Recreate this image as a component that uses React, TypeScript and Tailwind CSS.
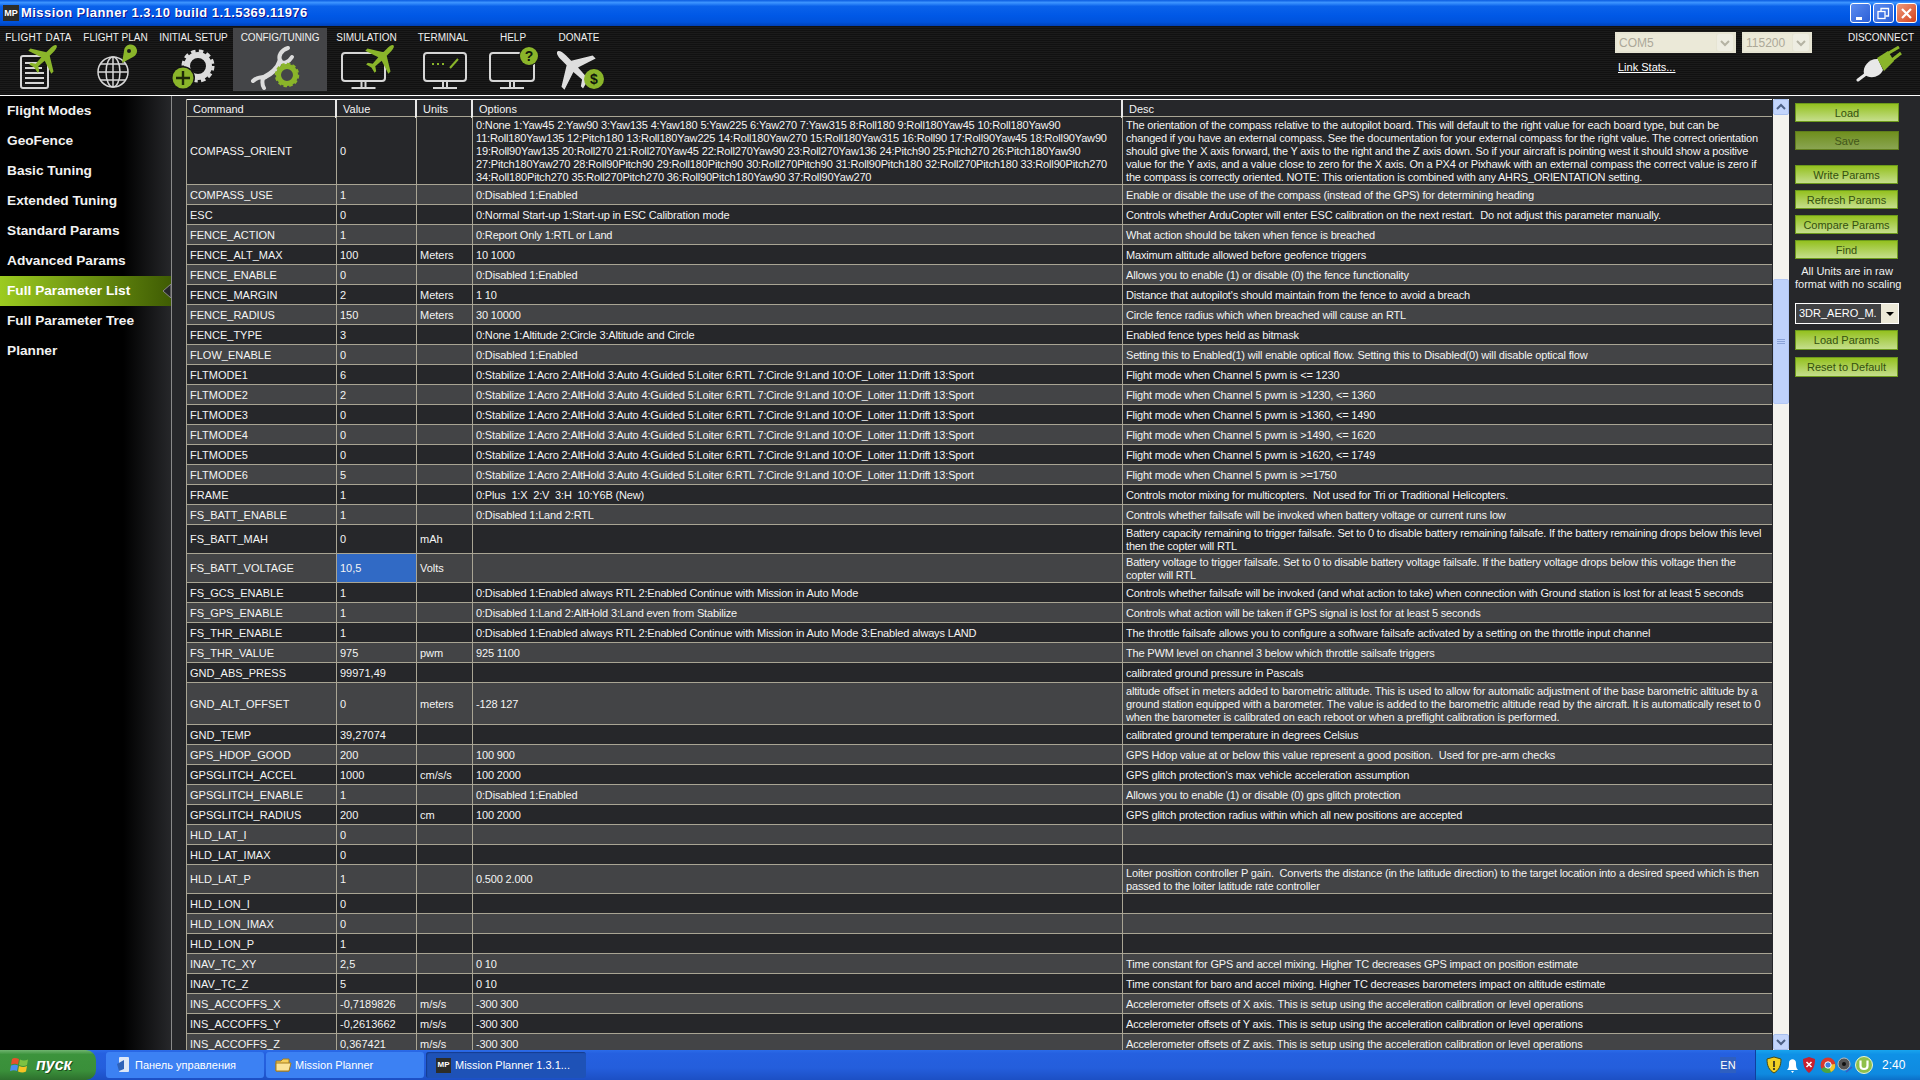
import type { ReactNode } from 'react'

type Row = { name: string; value?: string; units?: string; options?: string; desc?: string; h?: string; selected?: boolean }

const fltOpts = '0:Stabilize 1:Acro 2:AltHold 3:Auto 4:Guided 5:Loiter 6:RTL 7:Circle 9:Land 10:OF_Loiter 11:Drift 13:Sport'
const onOff = '0:Disabled 1:Enabled'

const rows: Row[] = [
  {
    name: 'COMPASS_ORIENT',
    value: '0',
    h: 'h-[68px]',
    options:
      '0:None 1:Yaw45 2:Yaw90 3:Yaw135 4:Yaw180 5:Yaw225 6:Yaw270 7:Yaw315 8:Roll180 9:Roll180Yaw45 10:Roll180Yaw90\n11:Roll180Yaw135 12:Pitch180 13:Roll180Yaw225 14:Roll180Yaw270 15:Roll180Yaw315 16:Roll90 17:Roll90Yaw45 18:Roll90Yaw90\n19:Roll90Yaw135 20:Roll270 21:Roll270Yaw45 22:Roll270Yaw90 23:Roll270Yaw136 24:Pitch90 25:Pitch270 26:Pitch180Yaw90\n27:Pitch180Yaw270 28:Roll90Pitch90 29:Roll180Pitch90 30:Roll270Pitch90 31:Roll90Pitch180 32:Roll270Pitch180 33:Roll90Pitch270\n34:Roll180Pitch270 35:Roll270Pitch270 36:Roll90Pitch180Yaw90 37:Roll90Yaw270',
    desc: 'The orientation of the compass relative to the autopilot board. This will default to the right value for each board type, but can be\nchanged if you have an external compass. See the documentation for your external compass for the right value. The correct orientation\nshould give the X axis forward, the Y axis to the right and the Z axis down. So if your aircraft is pointing west it should show a positive\nvalue for the Y axis, and a value close to zero for the X axis. On a PX4 or Pixhawk with an external compass the correct value is zero if\nthe compass is correctly oriented. NOTE: This orientation is combined with any AHRS_ORIENTATION setting.',
  },
  { name: 'COMPASS_USE', value: '1', options: onOff, desc: 'Enable or disable the use of the compass (instead of the GPS) for determining heading' },
  { name: 'ESC', value: '0', options: '0:Normal Start-up 1:Start-up in ESC Calibration mode', desc: 'Controls whether ArduCopter will enter ESC calibration on the next restart.  Do not adjust this parameter manually.' },
  { name: 'FENCE_ACTION', value: '1', options: '0:Report Only 1:RTL or Land', desc: 'What action should be taken when fence is breached' },
  { name: 'FENCE_ALT_MAX', value: '100', units: 'Meters', options: '10 1000', desc: 'Maximum altitude allowed before geofence triggers' },
  { name: 'FENCE_ENABLE', value: '0', options: onOff, desc: 'Allows you to enable (1) or disable (0) the fence functionality' },
  { name: 'FENCE_MARGIN', value: '2', units: 'Meters', options: '1 10', desc: "Distance that autopilot's should maintain from the fence to avoid a breach" },
  { name: 'FENCE_RADIUS', value: '150', units: 'Meters', options: '30 10000', desc: 'Circle fence radius which when breached will cause an RTL' },
  { name: 'FENCE_TYPE', value: '3', options: '0:None 1:Altitude 2:Circle 3:Altitude and Circle', desc: 'Enabled fence types held as bitmask' },
  { name: 'FLOW_ENABLE', value: '0', options: onOff, desc: 'Setting this to Enabled(1) will enable optical flow. Setting this to Disabled(0) will disable optical flow' },
  { name: 'FLTMODE1', value: '6', options: fltOpts, desc: 'Flight mode when Channel 5 pwm is <= 1230' },
  { name: 'FLTMODE2', value: '2', options: fltOpts, desc: 'Flight mode when Channel 5 pwm is >1230, <= 1360' },
  { name: 'FLTMODE3', value: '0', options: fltOpts, desc: 'Flight mode when Channel 5 pwm is >1360, <= 1490' },
  { name: 'FLTMODE4', value: '0', options: fltOpts, desc: 'Flight mode when Channel 5 pwm is >1490, <= 1620' },
  { name: 'FLTMODE5', value: '0', options: fltOpts, desc: 'Flight mode when Channel 5 pwm is >1620, <= 1749' },
  { name: 'FLTMODE6', value: '5', options: fltOpts, desc: 'Flight mode when Channel 5 pwm is >=1750' },
  { name: 'FRAME', value: '1', options: '0:Plus  1:X  2:V  3:H  10:Y6B (New)', desc: 'Controls motor mixing for multicopters.  Not used for Tri or Traditional Helicopters.' },
  { name: 'FS_BATT_ENABLE', value: '1', options: '0:Disabled 1:Land 2:RTL', desc: 'Controls whether failsafe will be invoked when battery voltage or current runs low' },
  {
    name: 'FS_BATT_MAH',
    value: '0',
    units: 'mAh',
    h: 'h-[29px]',
    desc: 'Battery capacity remaining to trigger failsafe. Set to 0 to disable battery remaining failsafe. If the battery remaining drops below this level\nthen the copter will RTL',
  },
  {
    name: 'FS_BATT_VOLTAGE',
    value: '10,5',
    units: 'Volts',
    h: 'h-[29px]',
    selected: true,
    desc: 'Battery voltage to trigger failsafe. Set to 0 to disable battery voltage failsafe. If the battery voltage drops below this voltage then the\ncopter will RTL',
  },
  { name: 'FS_GCS_ENABLE', value: '1', options: '0:Disabled 1:Enabled always RTL 2:Enabled Continue with Mission in Auto Mode', desc: 'Controls whether failsafe will be invoked (and what action to take) when connection with Ground station is lost for at least 5 seconds' },
  { name: 'FS_GPS_ENABLE', value: '1', options: '0:Disabled 1:Land 2:AltHold 3:Land even from Stabilize', desc: 'Controls what action will be taken if GPS signal is lost for at least 5 seconds' },
  { name: 'FS_THR_ENABLE', value: '1', options: '0:Disabled 1:Enabled always RTL 2:Enabled Continue with Mission in Auto Mode 3:Enabled always LAND', desc: 'The throttle failsafe allows you to configure a software failsafe activated by a setting on the throttle input channel' },
  { name: 'FS_THR_VALUE', value: '975', units: 'pwm', options: '925 1100', desc: 'The PWM level on channel 3 below which throttle sailsafe triggers' },
  { name: 'GND_ABS_PRESS', value: '99971,49', desc: 'calibrated ground pressure in Pascals' },
  {
    name: 'GND_ALT_OFFSET',
    value: '0',
    units: 'meters',
    options: '-128 127',
    h: 'h-[42px]',
    desc: 'altitude offset in meters added to barometric altitude. This is used to allow for automatic adjustment of the base barometric altitude by a\nground station equipped with a barometer. The value is added to the barometric altitude read by the aircraft. It is automatically reset to 0\nwhen the barometer is calibrated on each reboot or when a preflight calibration is performed.',
  },
  { name: 'GND_TEMP', value: '39,27074', desc: 'calibrated ground temperature in degrees Celsius' },
  { name: 'GPS_HDOP_GOOD', value: '200', options: '100 900', desc: 'GPS Hdop value at or below this value represent a good position.  Used for pre-arm checks' },
  { name: 'GPSGLITCH_ACCEL', value: '1000', units: 'cm/s/s', options: '100 2000', desc: "GPS glitch protection's max vehicle acceleration assumption" },
  { name: 'GPSGLITCH_ENABLE', value: '1', options: onOff, desc: 'Allows you to enable (1) or disable (0) gps glitch protection' },
  { name: 'GPSGLITCH_RADIUS', value: '200', units: 'cm', options: '100 2000', desc: 'GPS glitch protection radius within which all new positions are accepted' },
  { name: 'HLD_LAT_I', value: '0' },
  { name: 'HLD_LAT_IMAX', value: '0' },
  {
    name: 'HLD_LAT_P',
    value: '1',
    options: '0.500 2.000',
    h: 'h-[29px]',
    desc: 'Loiter position controller P gain.  Converts the distance (in the latitude direction) to the target location into a desired speed which is then\npassed to the loiter latitude rate controller',
  },
  { name: 'HLD_LON_I', value: '0' },
  { name: 'HLD_LON_IMAX', value: '0' },
  { name: 'HLD_LON_P', value: '1' },
  { name: 'INAV_TC_XY', value: '2,5', options: '0 10', desc: 'Time constant for GPS and accel mixing. Higher TC decreases GPS impact on position estimate' },
  { name: 'INAV_TC_Z', value: '5', options: '0 10', desc: 'Time constant for baro and accel mixing. Higher TC decreases barometers impact on altitude estimate' },
  { name: 'INS_ACCOFFS_X', value: '-0,7189826', units: 'm/s/s', options: '-300 300', desc: 'Accelerometer offsets of X axis. This is setup using the acceleration calibration or level operations' },
  { name: 'INS_ACCOFFS_Y', value: '-0,2613662', units: 'm/s/s', options: '-300 300', desc: 'Accelerometer offsets of Y axis. This is setup using the acceleration calibration or level operations' },
  { name: 'INS_ACCOFFS_Z', value: '0,367421', units: 'm/s/s', options: '-300 300', desc: 'Accelerometer offsets of Z axis. This is setup using the acceleration calibration or level operations' },
]

const sideItems = ['Flight Modes', 'GeoFence', 'Basic Tuning', 'Extended Tuning', 'Standard Params', 'Advanced Params', 'Full Parameter List', 'Full Parameter Tree', 'Planner']

const PLANE = 'M12 0.5 C13.2 0.5 13.7 3 13.7 5 L13.7 9 L23.5 15 L23.5 17.2 L13.7 14 L13.3 20 L16.2 22 L16.2 23.6 L12 22.6 L7.8 23.6 L7.8 22 L10.7 20 L10.3 14 L0.5 17.2 L0.5 15 L10.3 9 L10.3 5 C10.3 3 10.8 0.5 12 0.5Z'

const Plane = ({ x, y, size, rot, fill }: { x: number; y: number; size: number; rot: number; fill: string }) => (
  <path d={PLANE} fill={fill} transform={`translate(${x} ${y}) rotate(${rot}) scale(${size / 24}) translate(-12 -12)`} />
)

const Monitor = ({ x, w }: { x: number; w: number }) => (
  <g fill="none" stroke="#d6d6d6" strokeWidth="2">
    <rect x={x} y="9" width={w} height="28" rx="3" />
    <path d={`M${x + w / 2 - 2} 37 V43 M${x + w / 2 + 2} 37 V43`} />
    <path d={`M${x + w / 2 - 12} 44 H${x + w / 2 + 12}`} />
  </g>
)

const icons: ReactNode[] = [
  <>
    <rect x="21" y="12" width="27" height="32" rx="2" fill="none" stroke="#d6d6d6" strokeWidth="2" />
    <path d="M25 19 H38 M25 24 H42 M25 29 H44 M25 34 H44 M25 39 H44" stroke="#d6d6d6" strokeWidth="2" />
    <Plane x={45} y={13} size={34} rot={45} fill="#8ab52a" />
  </>,
  <>
    <g fill="none" stroke="#d6d6d6" strokeWidth="1.5">
      <circle cx="36" cy="28" r="15" />
      <ellipse cx="36" cy="28" rx="7" ry="15" />
      <path d="M36 13 V43 M21 28 H51 M23 20 H49 M23 36 H49" />
    </g>
    <path d="M45 19 L47 7 A6.5 6.5 0 1 1 56 13 Z" fill="#8ab52a" />
    <circle cx="52" cy="7" r="2" fill="#1a1a1a" />
  </>,
  <>
    <circle cx="44" cy="22" r="11" fill="none" stroke="#dcdcdc" strokeWidth="6" />
    <circle cx="44" cy="22" r="15" fill="none" stroke="#dcdcdc" strokeWidth="3" strokeDasharray="4.5 3.4" />
    <circle cx="29" cy="34" r="12" fill="#151515" />
    <circle cx="29" cy="34" r="10.5" fill="#8ab52a" />
    <path d="M29 27 V41 M22 34 H36" stroke="#1d2a08" strokeWidth="2.4" />
  </>,
  <>
    <g fill="none" stroke="#dcdcdc" strokeWidth="5" strokeLinecap="round">
      <path d="M30 34 C38 30 45 24 47 17" />
      <path d="M55 4 C48 6 45 12 47 17 C50 21 56 18 59 13" strokeWidth="4" />
      <path d="M20 37 C24 33 28 33 32 33 M30 34 C29 38 29 41 31 44" strokeWidth="4" />
    </g>
    <circle cx="54" cy="31" r="8.5" fill="none" stroke="#8ab52a" strokeWidth="5" />
    <circle cx="54" cy="31" r="11" fill="none" stroke="#8ab52a" strokeWidth="2.5" strokeDasharray="3.5 2.2" />
  </>,
  <>
    <Monitor x={15} w={43} />
    <Plane x={55} y={13} size={34} rot={45} fill="#8ab52a" />
  </>,
  <>
    <Monitor x={18} w={42} />
    <path d="M26 20 H28 M31 20 H33 M36 20 H38" stroke="#8ab52a" strokeWidth="2" />
    <path d="M44 24 L52 15" stroke="#8ab52a" strokeWidth="2" />
  </>,
  <>
    <Monitor x={10} w={44} />
    <circle cx="49" cy="12" r="10" fill="#151515" />
    <circle cx="49" cy="12" r="9" fill="#8ab52a" />
    <text x="49" y="17" textAnchor="middle" fontSize="14" fontWeight="700" fill="#10180a" fontFamily="Liberation Sans, sans-serif">?</text>
  </>,
  <>
    <Plane x={27} y={23} size={46} rot={-45} fill="#dedede" />
    <circle cx="48" cy="35" r="10" fill="#8ab52a" />
    <text x="48" y="40" textAnchor="middle" fontSize="14" fontWeight="700" fill="#10180a" fontFamily="Liberation Sans, sans-serif">$</text>
  </>,
]

const tabs = [
  { label: 'FLIGHT DATA', w: 'w-[77px]', vb: 77, track: 'tracking-[0.3px]' },
  { label: 'FLIGHT PLAN', w: 'w-[77px]', vb: 77, track: '' },
  { label: 'INITIAL SETUP', w: 'w-[79px]', vb: 79, track: 'tracking-[-0.1px]' },
  { label: 'CONFIG/TUNING', w: 'w-[94px]', vb: 94, track: 'tracking-[-0.1px]', active: true },
  { label: 'SIMULATION', w: 'w-[79px]', vb: 79, track: '' },
  { label: 'TERMINAL', w: 'w-[74px]', vb: 74, track: '' },
  { label: 'HELP', w: 'w-[66px]', vb: 66, track: '' },
  { label: 'DONATE', w: 'w-[66px]', vb: 66, track: '' },
]

const Chevron = ({ up, color = '#4d6185' }: { up?: boolean; color?: string }) => (
  <svg width="10" height="8" viewBox="0 0 10 8">
    <path d={up ? 'M1 6 L5 2 L9 6' : 'M1 2 L5 6 L9 2'} fill="none" stroke={color} strokeWidth="2" />
  </svg>
)

const GreenButton = ({ label, className, disabled }: { label: string; className: string; disabled?: boolean }) => (
  <div
    className={`flex h-[19px] items-center justify-center border pt-[1px] text-[11px] ${className} ${
      disabled
        ? 'border-[#5f7d1c] bg-[linear-gradient(180deg,#6f8f1d,#8aa552)] text-[#42561a]'
        : 'border-[#6d9a1c] bg-[linear-gradient(180deg,#94c11f,#c5de8c)] text-[#33500f]'
    }`}
  >
    {label}
  </div>
)

const Combo = ({ text, className, inner }: { text: string; className: string; inner: string }) => (
  <div className={`flex h-[21px] items-stretch gap-[1px] border-2 border-[#e6e4d3] bg-[#e6e4d3] ${className}`}>
    <div className={`flex items-center bg-[#ebe9d8] pl-[2px] text-[12px] text-[#aca899] ${inner}`}>{text}</div>
    <div className="flex w-[16px] items-center justify-center rounded-[2px] bg-[#eeede2]">
      <Chevron color="#b5b3a4" />
    </div>
  </div>
)

const Cell = ({ children, border = true, className = '' }: { children?: ReactNode; border?: boolean; className?: string }) => (
  <div className={`flex items-center overflow-hidden whitespace-pre pl-[3px] pt-[1px] leading-[13px] ${border ? 'border-r border-[#a9a594]' : ''} ${className}`}>
    <span>{children}</span>
  </div>
)

const HeadCell = ({ children, border = true }: { children: string; border?: boolean }) => (
  <div className={`flex items-center pl-[6px] pt-[1px] ${border ? 'border-r-2 border-[#e8e8e8]' : ''}`}>{children}</div>
)

const WinButton = ({ className, children }: { className: string; children: ReactNode }) => (
  <div className={`flex h-[20px] w-[21px] items-center justify-center rounded-[3px] border border-white ${className}`}>{children}</div>
)

const App = () => {
  return (
    <div className="flex h-screen w-[1920px] flex-col overflow-hidden bg-[#26272a] font-['Liberation_Sans',Arial,sans-serif] text-[11px] text-[#f4f4f4]">
      {/* title bar */}
      <div className="flex h-[26px] shrink-0 items-center bg-[linear-gradient(180deg,#0a5be0_0%,#3d95ff_10%,#0a62ea_24%,#0058e6_60%,#0053dc_85%,#0041b8_100%)] pl-[3px] pr-[3px]">
        <div className="flex h-[16px] w-[16px] items-center justify-center bg-[#2d2d28] text-[9px] font-bold leading-none text-white">MP</div>
        <div className="ml-[2px] text-[13px] font-bold tracking-[0.45px] text-white [text-shadow:1px_1px_#0f1089]">Mission Planner 1.3.10 build 1.1.5369.11976</div>
        <div className="ml-auto flex gap-[2px]">
          <WinButton className="bg-[linear-gradient(135deg,#5b8cf0,#2c5fd6)]">
            <span className="mt-[10px] mr-[4px] h-[3px] w-[6px] bg-white" />
          </WinButton>
          <WinButton className="bg-[linear-gradient(135deg,#5b8cf0,#2c5fd6)]">
            <svg width="13" height="13" viewBox="0 0 13 13" fill="none" stroke="#fff" strokeWidth="1.3">
              <rect x="1" y="4.5" width="7" height="7" />
              <path d="M4 4 V1.5 H11.5 V9 H8.5" />
            </svg>
          </WinButton>
          <WinButton className="bg-[linear-gradient(135deg,#ee9a7c,#d5421c)]">
            <svg width="13" height="13" viewBox="0 0 13 13" stroke="#fff" strokeWidth="2.2">
              <path d="M2 2 L11 11 M11 2 L2 11" />
            </svg>
          </WinButton>
        </div>
      </div>

      {/* toolbar */}
      <div className="flex h-[70px] shrink-0 border-b border-white bg-[#141414] bg-[repeating-linear-gradient(0deg,#111_0px,#111_1px,#1b1b1b_1px,#1b1b1b_2px)]">
        <div className="flex pt-[2px]">
          {tabs.map((tab, i) => (
            <div key={tab.label} className={`flex h-[63px] flex-col items-center ${tab.w} ${tab.active ? 'bg-[#444548]' : ''}`}>
              <div className={`mt-[3px] text-[10px] leading-[13px] text-[#f0f0f0] ${tab.track}`}>{tab.label}</div>
              <svg className="h-[47px] w-full" viewBox={`0 0 ${tab.vb} 47`}>
                {icons[i]}
              </svg>
            </div>
          ))}
        </div>
        <div className="ml-auto flex">
          <div className="mt-[6px] flex flex-col">
            <div className="flex gap-[6px]">
              <Combo text="COM5" className="w-[121px]" inner="w-[99px]" />
              <Combo text="115200" className="w-[70px]" inner="w-[48px]" />
            </div>
            <div className="ml-[3px] mt-[7px] text-[11px] leading-[14px] text-white underline">Link Stats...</div>
          </div>
          <div className="ml-[37px] mr-[7px] flex w-[64px] flex-col items-center pt-[5px]">
            <div className="text-[10px] leading-[13px] text-[#f0f0f0]">DISCONNECT</div>
            <svg className="mt-[2px] ml-[-5px]" width="46" height="36" viewBox="0 0 46 36">
              <path d="M2 34 L10 28" stroke="#e8e8e8" strokeWidth="3" strokeLinecap="round" />
              <path d="M8 28 C6 20 14 12 22 13 L27 24 C24 31 14 34 8 28Z" fill="#e8e8e8" />
              <path d="M21 12 L32 5 L38 15 L28 25Z" fill="#8ab52a" />
              <path d="M31 8 L43 1 M36 14 L45 7" stroke="#8ab52a" strokeWidth="3" />
            </svg>
          </div>
        </div>
      </div>

      {/* content */}
      <div className="flex min-h-0 flex-1">
        <div className="w-[172px] shrink-0 border-r border-[#8a8a8a] bg-[linear-gradient(90deg,#000_72%,#26272a_100%)]">
          {sideItems.map((item) => {
            const active = item === 'Full Parameter List'
            return (
              <div
                key={item}
                className={`relative flex h-[30px] items-center pl-[7px] text-[13.7px] font-bold ${
                  active ? 'bg-[linear-gradient(90deg,#9ccb20,#3f5c03)] text-white' : 'text-[#f2f2f2]'
                }`}
              >
                {item}
                {active && (
                  <svg className="absolute right-0 top-[8px]" width="8" height="14" viewBox="0 0 8 14">
                    <path d="M8 0 L0 7 L8 14Z" fill="#26272a" stroke="#8a8a8a" />
                  </svg>
                )}
              </div>
            )
          })}
        </div>

        <div className="flex min-w-0 flex-1 pl-[14px] pt-[3px]">
          {/* params grid */}
          <div className="w-[1586px] shrink-0 overflow-hidden border-l border-[#a9a594]">
            <div className="grid h-[18px] grid-cols-[150px_80px_56px_650px_1fr] border-b border-t border-b-[#a9a594] border-t-white bg-[#26272a]">
              <HeadCell>Command</HeadCell>
              <HeadCell>Value</HeadCell>
              <HeadCell>Units</HeadCell>
              <HeadCell>Options</HeadCell>
              <HeadCell border={false}>Desc</HeadCell>
            </div>
            {rows.map((row, i) => (
              <div
                key={row.name}
                className={`grid grid-cols-[150px_80px_56px_650px_1fr] border-b border-[#a9a594] ${row.h ?? 'h-[20px]'} ${
                  i % 2 === 0 ? 'bg-[#26272a]' : 'bg-[#434446]'
                }`}
              >
                <Cell>{row.name}</Cell>
                <Cell className={row.selected ? 'bg-[#316ac5]' : ''}>{row.value}</Cell>
                <Cell>{row.units}</Cell>
                <Cell className="tracking-[-0.16px]">{row.options}</Cell>
                <Cell border={false} className="tracking-[-0.18px]">{row.desc}</Cell>
              </div>
            ))}
          </div>

          {/* scrollbar */}
          <div className="ml-[1px] flex w-[16px] shrink-0 flex-col bg-[#f4f3ee]">
            <div className="flex h-[16px] items-center justify-center rounded-[2px] border border-[#a9c0ee] bg-[#c3d5fb]">
              <Chevron up />
            </div>
            <div className="h-[164px]" />
            <div className="flex h-[125px] items-center justify-center rounded-[2px] border border-[#b3c8f5] bg-[#bfd2fb]">
              <div className="h-[6px] w-[8px] bg-[repeating-linear-gradient(180deg,#8ba3d8_0px,#8ba3d8_1px,transparent_1px,transparent_2px)]" />
            </div>
            <div className="flex-1" />
            <div className="flex h-[16px] items-center justify-center rounded-[2px] border border-[#a9c0ee] bg-[#c3d5fb]">
              <Chevron />
            </div>
          </div>

          {/* action buttons */}
          <div className="ml-[6px] flex w-[104px] shrink-0 flex-col pt-[4px]">
            <GreenButton label="Load" className="w-[104px]" />
            <GreenButton label="Save" className="mt-[9px] w-[104px]" disabled />
            <GreenButton label="Write Params" className="mt-[15px] w-[103px]" />
            <GreenButton label="Refresh Params" className="mt-[6px] w-[103px]" />
            <GreenButton label="Compare Params" className="mt-[6px] w-[103px]" />
            <GreenButton label="Find" className="mt-[6px] w-[103px]" />
            <div className="mt-[6px] whitespace-nowrap text-center text-[11px] leading-[13px] text-[#f0f0f0]">
              All Units are in raw
              <br />
              format with no scaling
            </div>
            <div className="mt-[12px] flex h-[21px] w-[104px] border border-white bg-[#404143]">
              <div className="flex flex-1 items-center pl-[3px] text-[11px] text-white">3DR_AERO_M.</div>
              <div className="flex w-[17px] items-center justify-center bg-[#ece9d8]">
                <span className="h-0 w-0 border-x-[4px] border-t-[4px] border-x-transparent border-t-black" />
              </div>
            </div>
            <GreenButton label="Load Params" className="mt-[6px] h-[20px] w-[103px]" />
            <GreenButton label="Reset to Default" className="mt-[7px] h-[20px] w-[103px]" />
          </div>
        </div>
      </div>

      {/* taskbar */}
      <div className="flex h-[30px] shrink-0 items-stretch bg-[linear-gradient(180deg,#2b6be8_0%,#2560e0_12%,#245edc_60%,#1c4fc4_100%)] text-[11px] text-white">
        <div className="flex w-[96px] items-center gap-[6px] rounded-r-[10px] bg-[linear-gradient(180deg,#6fb46f_0%,#3c933c_15%,#3a8f3a_70%,#2d6f2d_100%)] pl-[10px] text-[16px] font-bold italic [text-shadow:1px_1px_#1c4c1c]">
          <svg width="20" height="20" viewBox="0 0 20 20">
            <path d="M2 4 C4 2.5 6 3 9 4 L8 9.5 C6 8.5 4 8.5 1 9.5Z" fill="#e5512c" />
            <path d="M10 4.5 C12 5.5 15 6 18 4.5 L17 10 C14 11.5 12 11 9 10Z" fill="#7dc242" />
            <path d="M1 10.5 C4 9.5 6 9.5 8 10.5 L7 16 C5 15 3 15 0 16Z" fill="#4b8df0" />
            <path d="M9 11 C12 12 14 12.5 17 11 L16 16.5 C13 18 11 17.5 8 16.5Z" fill="#f6c324" />
          </svg>
          пуск
        </div>
        <div className="ml-[10px] flex items-center gap-[2px] py-[2px]">
          <div className="flex h-[26px] w-[158px] items-center gap-[3px] rounded-[3px] bg-[#3c81f3] pl-[10px]">
            <svg width="16" height="18" viewBox="0 0 16 18">
              <rect x="3" y="1" width="10" height="15" rx="1" fill="#dfe8f7" />
              <path d="M1 8 L8 4 L8 13 L3 15Z" fill="#2f62b8" />
            </svg>
            <span>Панель управления</span>
          </div>
          <div className="flex h-[26px] w-[158px] items-center gap-[3px] rounded-[3px] bg-[#3c81f3] pl-[9px]">
            <svg width="17" height="15" viewBox="0 0 17 15">
              <path d="M1 3 H6 L8 1 H14 V13 H1Z" fill="#f4cf5d" stroke="#a67c1d" />
              <path d="M1 5 H16 L14 13 H1Z" fill="#fbe49a" stroke="#a67c1d" />
            </svg>
            <span>Mission Planner</span>
          </div>
          <div className="flex h-[26px] w-[160px] items-center gap-[4px] rounded-[3px] bg-[#1e52b7] pl-[10px] shadow-[inset_1px_1px_1px_#143c8f]">
            <div className="flex h-[15px] w-[15px] items-center justify-center bg-[#2d2d28] text-[8px] font-bold leading-none text-white">MP</div>
            <span>Mission Planner 1.3.1...</span>
          </div>
        </div>
        <div className="ml-auto flex items-center pr-[19px]">
          <span className="flex h-[16px] w-[16px] items-center justify-center bg-[#2e5fc0] text-[11px]">EN</span>
        </div>
        <div className="flex w-[165px] items-center gap-[2px] border-l border-[#0f3f9e] bg-[linear-gradient(180deg,#18a4ee_0%,#0f91e6_15%,#0f8ae0_80%,#0c6fc8_100%)] pl-[10px]">
          <svg width="108" height="20" viewBox="0 0 108 20">
            <path d="M8 2 L15 4 C15 11 13 15 8 18 C3 15 1 11 1 4Z" fill="#f2d024" stroke="#4a4a10" />
            <path d="M7.2 6 H8.8 V12 H7.2Z M7.2 13 H8.8 V15 H7.2Z" fill="#222" />
            <path d="M21 15 C23 13 23 11 23 8 C23 3 30 3 30 8 C30 11 30 13 32 15Z M25 16 H28 L26.5 18Z" fill="#fff" />
            <path d="M43 2 L49 4 C49 11 47 15 43 18 C39 15 37 11 37 4Z" fill="#c8202e" />
            <path d="M40.5 7 L45.5 12 M45.5 7 L40.5 12" stroke="#fff" strokeWidth="1.6" />
            <circle cx="62" cy="10" r="7.5" fill="#d9382c" />
            <path d="M62 10 L55 14 A7.5 7.5 0 0 0 68 14.5Z" fill="#4aa541" />
            <path d="M62 10 L69 9 A7.5 7.5 0 0 1 65 17Z" fill="#f2c42c" />
            <circle cx="62" cy="10" r="3.2" fill="#3f7fe0" stroke="#fff" />
            <circle cx="78" cy="9" r="6" fill="#555" stroke="#bbb" />
            <circle cx="78" cy="9" r="2" fill="#111" />
            <path d="M80 17 L86 12" stroke="#3e58c0" strokeWidth="1.5" />
            <circle cx="98" cy="10" r="8.5" fill="#8fc04b" stroke="#e8f4d8" />
            <path d="M94.5 5.5 V11 C94.5 15 101.5 15 101.5 11 V5.5" fill="none" stroke="#fff" strokeWidth="2.2" />
          </svg>
          <span className="ml-[6px] text-[12px]">2:40</span>
        </div>
      </div>
    </div>
  )
}

export default App
